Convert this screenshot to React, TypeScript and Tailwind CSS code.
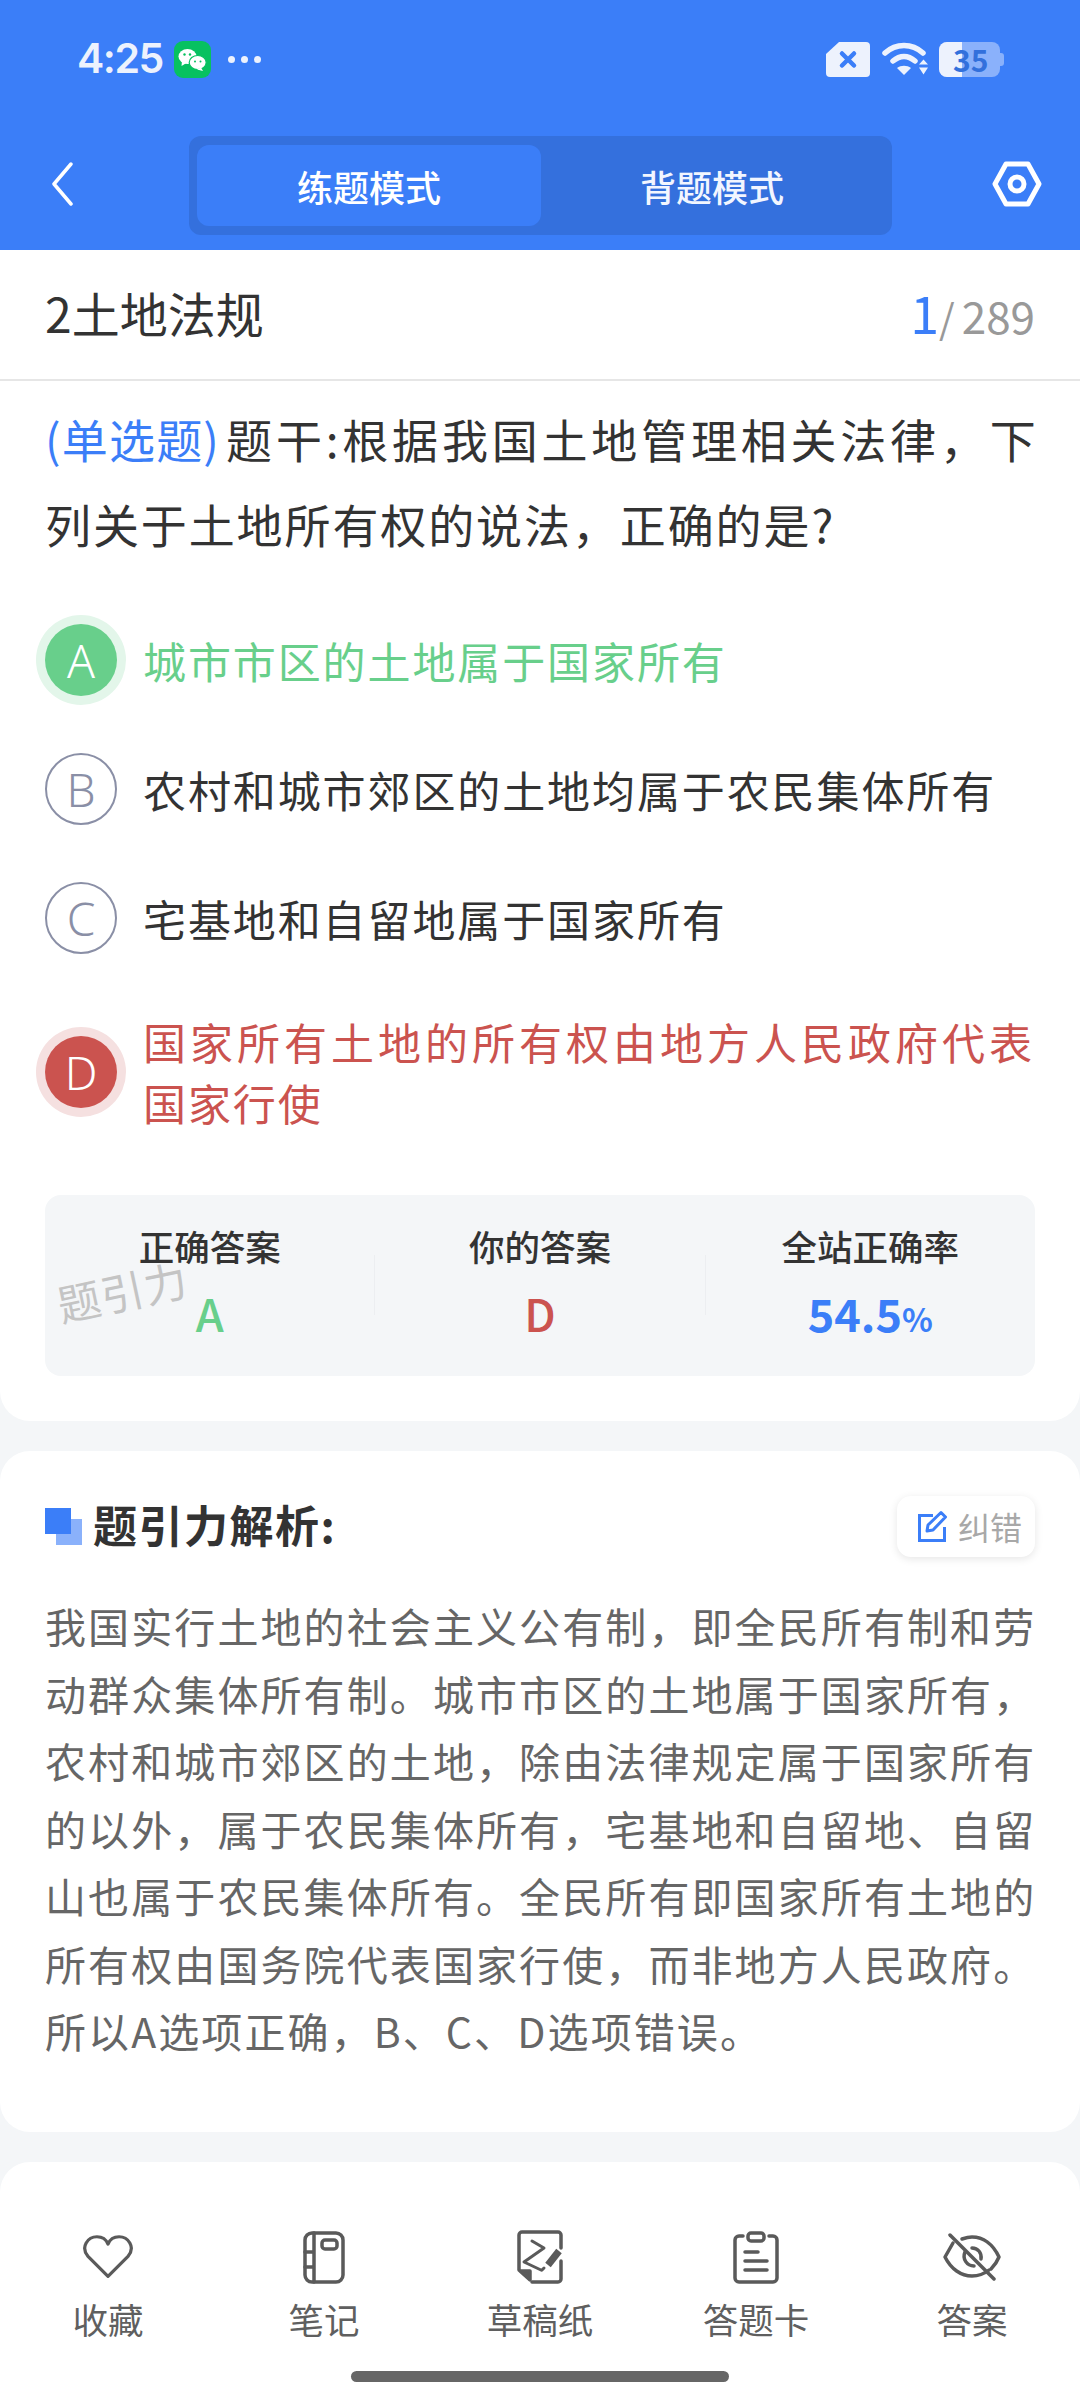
const options = [
  { key: "A", lines: ["城市市区的土地属于国家所有"], state: "right" },
  { key: "B", lines: ["农村和城市郊区的土地均属于农民集体所有"], state: "" },
  { key: "C", lines: ["宅基地和自留地属于国家所有"], state: "" },
  { key: "D", lines: ["国家所有土地的所有权由地方人民政府代表", "国家行使"], state: "wrong" },
];

function StatusIcons() {
  return (
    <div className="flex items-center">
      <svg width="44" height="35" viewBox="0 0 44 35">
        <path d="M13 0h27a4 4 0 0 1 4 4v27a4 4 0 0 1-4 4H4a4 4 0 0 1-4-4V12z" fill="#edf2fd" />
        <path d="M16 11.500l12 12M28 11.500l-12 12" stroke="#3b7ef8" strokeWidth="4.500" strokeLinecap="round" />
      </svg>
      <svg className="ml-[12px]" width="47" height="34" viewBox="0 0 47 34" fill="none">
        <path d="M3 11c11-10 27-10 38 0" stroke="#edf2fd" strokeWidth="5.500" strokeLinecap="round" />
        <path d="M11 19c7-6 15-6 22 0" stroke="#edf2fd" strokeWidth="5.500" strokeLinecap="round" />
        <path d="M15 26c4-3 10-3 14 0l-7 7z" fill="#edf2fd" />
        <path d="M37 22.500l4.500-5 4.500 5zM37 25.500l4.500 7 4.500-7z" fill="#edf2fd" />
      </svg>
      <div className="relative ml-[10px] mr-[4px] flex h-[35px] w-[61px] items-center rounded-[8px] bg-[#8ab1fb]">
        <div className="h-full w-[23px] rounded-l-[8px] bg-[#edf2fd]" />
        <span className="absolute left-[14px] top-0 text-[30px] leading-[35px] font-bold text-[#3270dc]">35</span>
        <div className="absolute -right-[4px] top-[11px] h-[13px] w-[4px] rounded-r-[3px] bg-[#8ab1fb]" />
      </div>
    </div>
  );
}

function Header() {
  return (
    <header className="bg-[#3b7ef8]">
      <div className="flex h-[118px] items-center pl-[77px] pr-[76px]">
        <span className="w-[81px] font-['Inter',sans-serif] text-[41px] font-semibold tracking-[-1.500px] text-[#edf2fd]">4:25</span>
        <div className="ml-[16px] h-[37px] w-[37px] rounded-[9px] bg-[#07c160]">
          <svg width="37" height="37" viewBox="0 0 37 37" fill="#fff">
            <ellipse cx="13.500" cy="15.500" rx="9" ry="7.500" />
            <path d="M8 20l-.5 5 5-3z" />
            <ellipse cx="23.700" cy="21.500" rx="8.500" ry="7" stroke="#07c160" strokeWidth="1.200" />
            <path d="M27 26.500l2 3.500-6-1.500z" />
            <circle cx="10.500" cy="13.500" r="1.200" fill="#07c160" />
            <circle cx="16" cy="13.500" r="1.200" fill="#07c160" />
            <circle cx="21" cy="20.500" r="1" fill="#07c160" />
            <circle cx="26.500" cy="20.500" r="1" fill="#07c160" />
          </svg>
        </div>
        <div className="ml-[17px] flex gap-[6px]">
          <i className="size-[7px] rounded-full bg-[#edf2fd]" />
          <i className="size-[7px] rounded-full bg-[#edf2fd]" />
          <i className="size-[7px] rounded-full bg-[#edf2fd]" />
        </div>
        <div className="ml-auto">
          <StatusIcons />
        </div>
      </div>
      <div className="flex h-[132px] items-start pl-[50px] pt-[18px]">
        <svg className="mt-[26px]" width="24" height="44" viewBox="0 0 24 44" fill="none">
          <path d="M21 2L4 22l17 20" stroke="#fff" strokeWidth="3.500" strokeLinecap="round" strokeLinejoin="round" />
        </svg>
        <div className="ml-[115px] flex h-[99px] w-[703px] rounded-[12px] bg-[#3470dd] py-[9px] pl-[8px]">
          <div className="flex h-[81px] w-[344px] items-center justify-center rounded-[12px] bg-[#3b7ef8] text-[36px] font-medium text-white">
            练题模式
          </div>
          <div className="flex h-[81px] w-[342px] items-center justify-center text-[36px] font-medium text-[#f2f6ff]">
            背题模式
          </div>
        </div>
        <svg className="ml-[100px] mt-[25px]" width="50" height="46" viewBox="0 0 50 46" fill="none">
          <path d="M14 3h22l11 20-11 20H14L3 23z" stroke="#fff" strokeWidth="5" strokeLinejoin="round" />
          <circle cx="25" cy="23" r="7" stroke="#fff" strokeWidth="5" />
        </svg>
      </div>
    </header>
  );
}

function OptionRow({ letter, lines, state }: { letter: string; lines: string[]; state: string }) {
  const badge =
    state === "right"
      ? "bg-[#68cf8b] text-white ring-[9px] ring-[#e3f6ea]"
      : state === "wrong"
        ? "bg-[#cb534f] text-white ring-[9px] ring-[#f5e0e0]"
        : "border-2 border-[#8a8fa6] text-[#8a8fa6]";
  const color = state === "right" ? "text-[#68cf8b]" : state === "wrong" ? "text-[#cb534f]" : "text-[#333333]";
  return (
    <div className="flex items-center gap-[26px]">
      <div className={`flex size-[72px] shrink-0 items-center justify-center rounded-full font-['Noto_Sans',sans-serif] text-[46px] font-light ${badge}`}>
        {letter}
      </div>
      <p className={`text-[43px] leading-[61px] tracking-[1.900px] whitespace-nowrap ${color}`}>
        {lines.map((line, i) => (
          <span key={line} className={lines.length > 1 && i === 0 ? "block tracking-[4px]" : "block"}>
            {line}
          </span>
        ))}
      </p>
    </div>
  );
}

function StatCol({ label, value, color, unit }: { label: string; value: string; color: string; unit?: string }) {
  return (
    <div className="flex flex-1 flex-col items-center pt-[27px]">
      <span className="text-[35.500px] leading-[48px] font-medium text-[#333333]">{label}</span>
      <span className={`mt-[17px] text-[45px] leading-[52px] ${unit ? "font-semibold" : "font-medium"} ${color}`}>
        {value}
        {unit && <span className="text-[32px]">{unit}</span>}
      </span>
    </div>
  );
}

function Divider() {
  return <div className="mt-[60px] h-[60px] w-px bg-[#eceef1]" />;
}

function QuestionCard() {
  return (
    <section className="rounded-b-[30px] bg-white pb-[45px]">
      <div className="flex h-[131px] items-center justify-between border-b-2 border-[#e6e6e6] px-[45px] pb-[5px]">
        <span className="text-[48px] text-[#333333]">2土地法规</span>
        <span className="flex items-baseline text-[#999999]">
          <span className="text-[52px] text-[#3b7ef8]">1</span>
          <span className="mr-[7px] text-[40px]">/</span>
          <span className="text-[44px]">289</span>
        </span>
      </div>
      <div className="px-[45px]">
        <p className="mt-[15px] text-[46px] leading-[85px] tracking-[1.900px] whitespace-nowrap text-[#333333]">
          <span className="block tracking-[3.800px]">
            <span className="mr-[6px] tracking-[1.200px] text-[#3b7ef8]">(单选题)</span>题干:根据我国土地管理相关法律，下
          </span>
          <span className="block">列关于土地所有权的说法，正确的是?</span>
        </p>
        <div className="mt-[58px] flex flex-col gap-[57px]">
          {options.map((o) => (
            <OptionRow key={o.key} letter={o.key} lines={o.lines} state={o.state} />
          ))}
        </div>
        <div className="relative mt-[62px] flex h-[181px] rounded-[16px] bg-[#f4f6f8]">
          <StatCol label="正确答案" value="A" color="text-[#68cf8b]" />
          <Divider />
          <StatCol label="你的答案" value="D" color="text-[#cb534f]" />
          <Divider />
          <StatCol label="全站正确率" value="54.5" unit="%" color="text-[#3b7ef8]" />
          <span className="absolute left-[11px] top-[70px] -rotate-[12deg] text-[43px] leading-[50px] tracking-[1px] text-[#c4c4c4]">
            题引力
          </span>
        </div>
      </div>
    </section>
  );
}

function AnalysisCard() {
  return (
    <section className="mt-[30px] h-[681px] rounded-[30px] bg-white px-[45px] pt-[46px]">
      <div className="flex h-[58px] items-center">
        <div className="relative size-[37px]">
          <div className="absolute bottom-0 right-0 size-[26px] bg-[#8ab1fb]" />
          <div className="absolute left-0 top-0 size-[26px] bg-[#3b7ef8]" />
        </div>
        <span className="ml-[11px] -mt-[5px] text-[44px] font-semibold tracking-[1.500px] text-[#333333]">题引力解析:</span>
        <div className="ml-auto flex h-[61px] w-[138px] items-center gap-[9px] rounded-[14px] bg-white pl-[20px] text-[32px] text-[#a8a8a8] shadow-[0_2px_8px_rgba(0,0,0,0.1)]">
          <svg className="shrink-0" width="32" height="32" viewBox="0 0 32 32" fill="none" stroke="#3b7ef8" strokeWidth="3">
            <path d="M16 5.500H2.500v25h25V17" />
            <path d="M11 15L24 2.500l4.500 4.500L16 20l-6 1z" strokeLinejoin="round" />
          </svg>
          纠错
        </div>
      </div>
      <p className="mt-[37px] -mr-[4px] text-[41px] leading-[67.500px] tracking-[2.100px] text-[#666666]">
        我国实行土地的社会主义公有制，即全民所有制和劳动群众集体所有制。城市市区的土地属于国家所有，农村和城市郊区的土地，除由法律规定属于国家所有的以外，属于农民集体所有，宅基地和自留地、自留山也属于农民集体所有。全民所有即国家所有土地的所有权由国务院代表国家行使，而非地方人民政府。所以A选项正确，B、C、D选项错误。
      </p>
    </section>
  );
}

const iconStroke = { fill: "none", stroke: "#5a5a5a", strokeWidth: 3.5, strokeLinecap: "round", strokeLinejoin: "round" } as const;

const navItems = [
  {
    label: "收藏",
    icon: (
      <svg width="52" height="46" viewBox="0 0 56 50" {...iconStroke}>
        <path d="M28 46L6 24C-2 14 6 3 16 3c6 0 10 3 12 8 2-5 6-8 12-8 10 0 18 11 10 21z" />
      </svg>
    ),
  },
  {
    label: "笔记",
    icon: (
      <svg width="42" height="53" viewBox="0 0 42 53" {...iconStroke}>
        <rect x="2" y="2" width="38" height="49" rx="7" />
        <path d="M11 2v49M2 21h9M2 36h9" />
        <rect x="19" y="9" width="15" height="9" rx="3" />
      </svg>
    ),
  },
  {
    label: "草稿纸",
    icon: (
      <svg width="46" height="54" viewBox="0 0 46 54" {...iconStroke}>
        <path d="M2 40V5a3 3 0 0 1 3-3h36a3 3 0 0 1 3 3v13M44 31v18a3 3 0 0 1-3 3H15" />
        <path d="M3 41h10v9z" fill="#5a5a5a" />
        <path d="M15 11l12 7-20 14 17 8" strokeWidth="3" />
        <path d="M31 35l11-14" strokeWidth="7" strokeLinecap="butt" />
        <path d="M25 40l2-2" strokeWidth="3" />
      </svg>
    ),
  },
  {
    label: "答题卡",
    icon: (
      <svg width="46" height="53" viewBox="0 0 46 53" {...iconStroke}>
        <path d="M10 5H6a4 4 0 0 0-4 4v38a4 4 0 0 0 4 4h34a4 4 0 0 0 4-4V9a4 4 0 0 0-4-4h-4" />
        <rect x="15" y="2" width="16" height="8" rx="3" />
        <path d="M12 21h13M12 30h22M12 39h22" />
      </svg>
    ),
  },
  {
    label: "答案",
    icon: (
      <svg width="58" height="48" viewBox="0 0 58 48" {...iconStroke}>
        <path d="M10 10L2 24c6 12 16 19 27 19 6 0 12-2 17-6M19 6c3-1 6-2 10-2 11 0 21 7 27 20-2 5-5 9-8 12" />
        <path d="M7 2l44 44" />
        <path d="M22 19c-3 7 2 14 9 14M29 15c6 0 10 5 9 11" />
      </svg>
    ),
  },
];

function BottomNav() {
  return (
    <nav className="mt-[30px] flex h-[238px] flex-col rounded-t-[30px] bg-white">
      <div className="flex justify-between px-[21px] pt-[67px]">
        {navItems.map((item) => (
          <div key={item.label} className="flex w-[174px] flex-col items-center">
            <div className="flex h-[56px] items-center">{item.icon}</div>
            <span className="mt-[9px] text-[35.500px] leading-[50px] text-[#5f5f5f]">{item.label}</span>
          </div>
        ))}
      </div>
      <div className="mx-auto mt-[27px] h-[11px] w-[378px] rounded-full bg-[#666666]" />
    </nav>
  );
}

export default function App() {
  return (
    <div className="h-[2400px] w-[1080px] overflow-hidden bg-[#f4f6f8] font-['Noto_Sans_CJK_SC','Noto_Sans',sans-serif]">
      <Header />
      <QuestionCard />
      <AnalysisCard />
      <BottomNav />
    </div>
  );
}
